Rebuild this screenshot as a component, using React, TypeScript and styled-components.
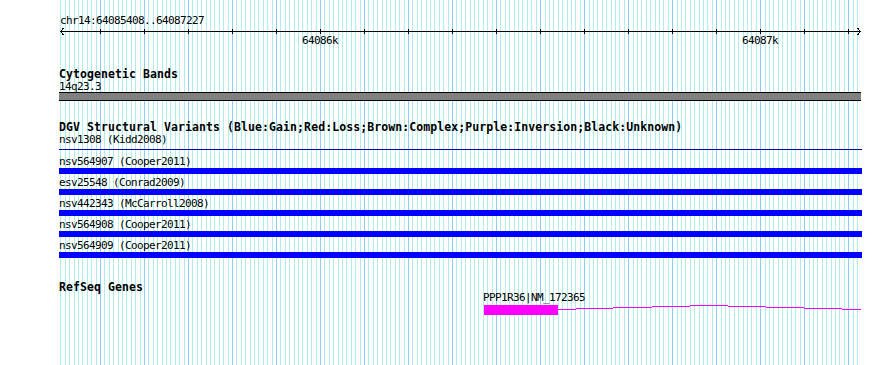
import React from 'react';
import styled, { createGlobalStyle } from 'styled-components';

const START = 64085408;
const END = 64087227;
const LEFT = 59;
const SPAN = 801;

const toX = (bp: number) => Math.ceil(LEFT + ((bp - START) * SPAN) / (END - START + 1));

const gridLines: { x: number; major: boolean }[] = [];
for (let bp = 64085410; bp <= END; bp += 10) {
  gridLines.push({ x: toX(bp), major: bp % 100 === 0 });
}

const ticks: number[] = [];
for (let bp = 64085500; bp <= END; bp += 100) ticks.push(bp);

const variants = [
  'nsv564907 (Cooper2011)',
  'esv25548 (Conrad2009)',
  'nsv442343 (McCarroll2008)',
  'nsv564908 (Cooper2011)',
  'nsv564909 (Cooper2011)',
];

const GENE_X = 484;
const GENE_W = 74;

// intron hat, drawn as GD does it: 1px steps
const intron = [
  { x1: 558, x2: 576, y: 309 },
  { x1: 576, x2: 613, y: 308 },
  { x1: 613, x2: 652, y: 307 },
  { x1: 652, x2: 690, y: 306 },
  { x1: 690, x2: 728, y: 305 },
  { x1: 728, x2: 766, y: 306 },
  { x1: 766, x2: 804, y: 307 },
  { x1: 804, x2: 842, y: 308 },
  { x1: 842, x2: 861, y: 309 },
];

const GlobalStyle = createGlobalStyle`
  html, body {
    margin: 0;
    padding: 0;
    background: #ffffff;
  }
`;

const App = () => {
  return (
    <>
      <GlobalStyle />
      <Frame>
        <GridLayer width={890} height={365} shapeRendering="crispEdges">
          {gridLines.map((l) => (
            <rect
              key={l.x}
              x={l.x}
              y={0}
              width={1}
              height={365}
              fill={l.major ? '#87cefa' : '#b0eeee'}
            />
          ))}
        </GridLayer>

        <Tracks>
          <RulerLabel>chr14:64085408..64087227</RulerLabel>
          <Ruler viewBox="59 26 803 22" width={803} height={22} shapeRendering="crispEdges">
            <line x1={60} y1={31.5} x2={861} y2={31.5} stroke="#000" />
            <polyline points="63.5,28 60.5,31.5 63.5,35" fill="none" stroke="#000" />
            <polyline points="857.5,28 860.5,31.5 857.5,35" fill="none" stroke="#000" />
            {ticks.map((bp) => (
              <line key={bp} x1={toX(bp) + 0.5} y1={29} x2={toX(bp) + 0.5} y2={34} stroke="#000" />
            ))}
            {ticks
              .filter((bp) => bp % 1000 === 0)
              .map((bp) => (
                <TickText key={bp} x={toX(bp)} y={44} textAnchor="middle">
                  {Math.round(bp / 1000)}k
                </TickText>
              ))}
          </Ruler>

          <TrackTitle $top={21}>Cytogenetic Bands</TrackTitle>
          <FeatureLabel $top={3}>14q23.3</FeatureLabel>
          <Band />

          <TrackTitle $top={21}>
            DGV Structural Variants (Blue:Gain;Red:Loss;Brown:Complex;Purple:Inversion;Black:Unknown)
          </TrackTitle>
          <FeatureLabel $top={3}>nsv1308 (Kidd2008)</FeatureLabel>
          <ThinVariant />
          {variants.map((name, i) => (
            <React.Fragment key={name}>
              <FeatureLabel $top={i === 0 ? 7 : 4}>{name}</FeatureLabel>
              <VariantBar />
            </React.Fragment>
          ))}

          <TrackTitle $top={24}>RefSeq Genes</TrackTitle>
          <FeatureLabel $top={1} style={{ marginLeft: GENE_X - 1 - LEFT }}>
            PPP1R36|NM_172365
          </FeatureLabel>
          <Gene viewBox="59 305 803 10" width={803} height={10} shapeRendering="crispEdges">
            <rect x={GENE_X} y={305} width={GENE_W} height={10} fill="#ff00ff" />
            {intron.map((s) => (
              <rect key={s.x1} x={s.x1} y={s.y} width={s.x2 - s.x1} height={1} fill="#ff00ff" />
            ))}
          </Gene>
        </Tracks>
      </Frame>
    </>
  );
};

export default App;

const Frame = styled.div`
  position: relative;
  width: 890px;
  height: 365px;
  overflow: hidden;
  background: #ffffff;
`;

const GridLayer = styled.svg`
  position: absolute;
  top: 0;
  left: 0;
  z-index: 0;
  display: block;
`;

const Tracks = styled.div`
  position: relative;
  z-index: 1;
  display: flex;
  flex-direction: column;
  align-items: flex-start;
  width: 803px;
  margin-left: 59px;
  font-family: 'DejaVu Sans Mono', 'Liberation Mono', monospace;
  color: #000000;
`;

const FeatureLabel = styled.div<{ $top: number }>`
  margin-top: ${(p) => p.$top}px;
  height: 10px;
  font-size: 11px;
  letter-spacing: -0.62px;
  line-height: 10px;
  white-space: pre;
`;

const RulerLabel = styled(FeatureLabel).attrs({ $top: 16 })`
  margin-left: 1px;
`;

const TrackTitle = styled.div<{ $top: number }>`
  margin-top: ${(p) => p.$top}px;
  height: 10px;
  font-size: 11.5px;
  font-weight: bold;
  letter-spacing: 0.08px;
  line-height: 10px;
  white-space: pre;
`;

const Ruler = styled.svg`
  display: block;
  overflow: visible;
`;

const TickText = styled.text`
  font-family: 'DejaVu Sans Mono', 'Liberation Mono', monospace;
  font-size: 11px;
  letter-spacing: -0.62px;
  fill: #000000;
`;

const Band = styled.div`
  box-sizing: border-box;
  width: 802px;
  height: 9px;
  background: #808080;
  border-top: 1px solid #000000;
  border-bottom: 1px solid #000000;
`;

const ThinVariant = styled.div`
  margin-top: 4px;
  width: 803px;
  height: 1px;
  background: #0000b4;
`;

const VariantBar = styled.div`
  margin-top: 1px;
  width: 803px;
  height: 6px;
  background: #0000ff;
`;

const Gene = styled.svg`
  display: block;
  margin-top: 2px;
`;
